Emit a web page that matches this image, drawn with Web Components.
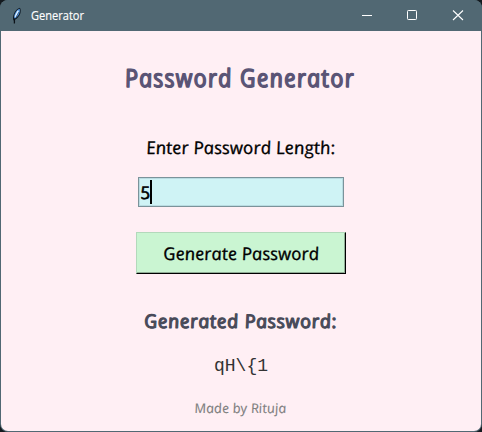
<!DOCTYPE html>
<html lang="en"><head><meta charset="utf-8"><title>Generator</title>
<style>html,body{margin:0;width:482px;height:432px;overflow:hidden;background:#141a1f}</style></head>
<body><generator-window></generator-window>
<script>
// Handwriting-style label: an italic face set upright, fitted to a given width.
class HandText extends HTMLElement{
  connectedCallback(){
    const g=n=>this.getAttribute(n);
    const w=+g('w'),s=+g('size'),h=Math.ceil(s*1.4),b=Math.round(s*1.08);
    const root=this.attachShadow({mode:'open'});
    root.innerHTML=`<style>:host{display:block;width:${w}px;height:${h}px}svg{display:block;overflow:visible}
    text{font:italic 400 ${s}px "Open Sans","Noto Sans",sans-serif;fill:currentColor;stroke:currentColor;stroke-width:${g('stroke')||.3};stroke-linejoin:round;letter-spacing:${g('track')||0}px}</style>
    <svg width="${w}" height="${h}"><g transform="translate(0 ${b}) skewX(10)"><text textLength="${w}" lengthAdjust="spacingAndGlyphs"></text></g></svg>`;
    root.querySelector('text').textContent=g('text');
  }
}
customElements.define('hand-text',HandText);

class TitleBar extends HTMLElement{
  constructor(){super();this.attachShadow({mode:'open'}).innerHTML=`<style>
  :host{display:flex;height:31px;background:#516873;color:#fff;align-items:center;box-sizing:border-box;padding-left:10px}
  .name{margin-left:5px;flex:1}
  .name svg{display:block;overflow:visible}
  .name text{font:12px "Open Sans","Noto Sans",sans-serif;fill:#fff;stroke:#fff;stroke-width:.15}
  .controls{display:flex}.controls svg{display:block}</style>
  <svg width="16" height="18" viewBox="0 0 16 18"><path d="M3.4 13.5C1.8 9 5 2.4 10 .8c2 3.6-.2 9.6-5 12z" fill="#0f1a26"/><path d="M4.4 11.8C3.5 8 6 3.4 9.5 1.8c1.2 3.2-1 7.8-5.1 10z" fill="#5ba2ee"/><path d="M5.2 9.8L8.2 3.8" stroke="#e5f3ff" stroke-width="1.4"/><path d="M6.2 10L9 5" stroke="#142338" stroke-width=".5"/><path d="M4.4 11.5v5" stroke="#0c1218" stroke-width="1.3"/></svg>
  <div class="name"><svg width="54" height="16"><text y="12" textLength="53" lengthAdjust="spacingAndGlyphs">Generator</text></svg></div>
  <div class="controls">
  <svg width="46" height="31"><path d="M11 15.5h10" stroke="#fff"/></svg>
  <svg width="46" height="31"><rect x="10.5" y="10.5" width="9" height="9" rx=".8" fill="none" stroke="#fff"/></svg>
  <svg width="39" height="31"><path d="M10 10.5l10 9.5M20 10.5l-10 9.5" stroke="#fff" stroke-width="1.1"/></svg></div>`;}
}
customElements.define('title-bar',TitleBar);

class LengthEntry extends HTMLElement{
  constructor(){super();this.attachShadow({mode:'open'}).innerHTML=`<style>
  :host{display:flex;align-items:flex-start;box-sizing:border-box;width:206px;height:30px;background:#cff3f5;border:1px solid #7b939a;box-shadow:inset -1px -1px #b9dce2,inset 1px 1px #b9dce2;padding:2px 0 0 2px}
  i{width:2px;height:24px;background:#000;margin-left:-1px}</style>
  <slot></slot><i></i>`;}
}
customElements.define('length-entry',LengthEntry);

class RaisedButton extends HTMLElement{
  constructor(){super();this.attachShadow({mode:'open'}).innerHTML=`<style>
  :host{display:flex;box-sizing:border-box;width:210px;height:42px;background:#caf5d2;border:1px solid;border-color:#b3d9bb #000 #000 #b3d9bb;box-shadow:inset -1px -1px #90ad95;padding:8px 0 0 26.5px}</style><slot></slot>`;}
}
customElements.define('raised-button',RaisedButton);

class GeneratorWindow extends HTMLElement{
  constructor(){super();this.attachShadow({mode:'open'}).innerHTML=`<style>
  :host{display:flex;flex-direction:column;width:482px;height:432px;box-sizing:border-box;border-radius:8px;overflow:hidden;background:#516873}
  main{flex:1;margin:0 1px 1px;background:#ffeff4;border-radius:0 0 7px 7px;display:flex;flex-direction:column;align-items:center;min-height:0;overflow:hidden}
  main>*{flex:none}
  .title{margin-top:29px;color:#5a5475}.label{margin-top:40px;color:#000}
  length-entry{margin-top:17px}raised-button{margin-top:25px}
  .result{margin-top:34px;color:#484a59}
  .password{font:18px/22px "Liberation Mono",monospace;color:#333;margin-top:20px;height:22px}
  .credit{margin-top:22px;color:#808080}</style>
  <title-bar></title-bar><main>
  <hand-text class="title" text="Password Generator" w="230" size="25" track="1.2" stroke="1.4"></hand-text>
  <hand-text class="label" text="Enter Password Length:" w="189" size="17.5"></hand-text>
  <length-entry><hand-text text="5" w="10" size="17.5" stroke=".6"></hand-text></length-entry>
  <raised-button><hand-text text="Generate Password" w="156" size="17.5"></hand-text></raised-button>
  <hand-text class="result" text="Generated Password:" w="193" size="18.8" track=".6" stroke="1.1"></hand-text>
  <div class="password">qH\\{1</div>
  <hand-text class="credit" text="Made by Rituja" w="92" size="13.3" stroke=".1"></hand-text>
  </main>`;}
}
customElements.define('generator-window',GeneratorWindow);
</script></body></html>
